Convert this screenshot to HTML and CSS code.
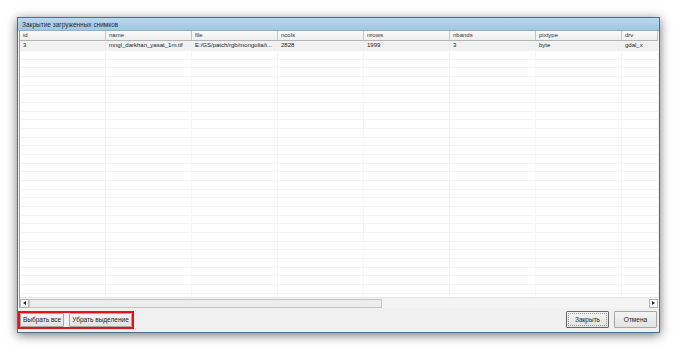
FILE: index.html
```html
<!DOCTYPE html>
<html lang="ru">
<head>
  <meta charset="UTF-8">
  <title>Закрытие загруженных снимков</title>
  <link rel="stylesheet" href="styles.css">
</head>
<body>
  <div class="window">
    <div class="titlebar">Закрытие загруженных снимков</div>
    <div class="grid">
      <div class="row head">
        <div>id</div><div>name</div><div>file</div><div>ncols</div>
        <div>nrows</div><div>nbands</div><div>pixtype</div><div>drv</div>
      </div>
      <div class="row selected">
        <div>3</div><div>mngl_darkhan_yasat_1m.tif</div><div>E:/GS/patch/rgb/mongolia/t...</div><div>2828</div>
        <div>1999</div><div>3</div><div>byte</div><div>gdal_x</div>
      </div>
      <div class="filler"></div>
      <div class="hscroll">
        <div class="arrow left"></div>
        <div class="thumb"></div>
        <div class="track"></div>
        <div class="arrow right"></div>
      </div>
    </div>
    <div class="footer">
      <div class="marked">
        <button>Выбрать все</button>
        <button>Убрать выделение</button>
      </div>
      <div class="actions">
        <button class="default">Закрыть</button>
        <button>Отмена</button>
      </div>
    </div>
  </div>
</body>
</html>
```

FILE: styles.css
```css
* {
  margin: 0;
  padding: 0;
  box-sizing: border-box;
}

body {
  padding: 17px;
  background-color: white;
  font-family: "Liberation Sans", Arial, sans-serif;
  color: #222;
}

.window {
  width: 643px;
  height: 316px;
  display: flex;
  flex-direction: column;
  border: 1px solid #4f6f8c;
  background-color: #f0f0f0;
  box-shadow: 0 2px 10px rgba(0,0,0,0.55);
}

.titlebar {
  height: 13px;
  line-height: 13px;
  padding-left: 4px;
  font-size: 6.5px;
  color: #1c2b3a;
  background: linear-gradient(to bottom, #bcd8ec, #9fc6e2);
  border-bottom: 1px solid #8fb1cc;
}

.grid {
  flex: 1;
  display: flex;
  flex-direction: column;
  margin: 0 1px;
  background-color: white;
  border-left: 1px solid #a0a0a0;
  overflow: hidden;
}

.row {
  display: grid;
  grid-template-columns: repeat(7, 86px) 1fr;
  height: 9px;
  font-size: 6px;
  line-height: 8px;
}

.row > div {
  padding-left: 3px;
  white-space: nowrap;
  overflow: hidden;
  border-right: 1px solid #efefef;
  border-bottom: 1px solid #efefef;
}

.head {
  height: 10px;
  background: linear-gradient(to bottom, #fafafa, #ededed);
  color: #333;
}

.head > div {
  border-right-color: #c6c6c6;
  border-bottom-color: #b5b5b5;
  line-height: 9px;
}

.selected {
  height: 10px;
  background-color: #f1f1f1;
}

.selected > div {
  line-height: 9px;
}

.filler {
  flex: 1;
  background:
    repeating-linear-gradient(to right, transparent 0 85px, #f5f5f5 85px 86px),
    repeating-linear-gradient(to bottom, transparent 0 7.67px, #f3f3f3 7.67px 8.67px);
}

.hscroll {
  height: 11px;
  display: flex;
  align-items: center;
  padding: 1px 0;
  background-color: #f4f4f4;
  border-top: 1px solid #e6e6e6;
}

.arrow {
  width: 9px;
  height: 9px;
  border: 1px solid #b5b5b5;
  background-color: #fdfdfd;
  display: flex;
  align-items: center;
  justify-content: center;
}

.arrow::after {
  content: "";
  border-top: 2px solid transparent;
  border-bottom: 2px solid transparent;
}

.left::after {
  border-right: 3px solid #222;
}

.right::after {
  border-left: 3px solid #222;
}

.thumb {
  width: 353px;
  height: 9px;
  border: 1px solid #c4c4c4;
  background-color: #ececec;
}

.track {
  flex: 1;
}

.footer {
  height: 24px;
  display: flex;
  justify-content: space-between;
  align-items: center;
  padding: 0 2px 1px 0;
}

.marked {
  display: flex;
  gap: 5px;
  border: 2px solid #e0121b;
}

.actions {
  display: flex;
  gap: 5px;
}

button {
  height: 14px;
  padding: 0 5px;
  font-family: "Liberation Sans", Arial, sans-serif;
  font-size: 6.5px;
  color: #222;
  border: 1px solid #a8a8a8;
  border-radius: 1px;
  background: linear-gradient(to bottom, #f4f4f4, #e2e2e2);
}

.marked button {
  height: 14px;
  padding: 0 2px;
}

.actions button {
  height: 17px;
  width: 43px;
}

.default {
  border-color: #666;
  outline: 1px dotted #999;
  outline-offset: -3px;
}
```
